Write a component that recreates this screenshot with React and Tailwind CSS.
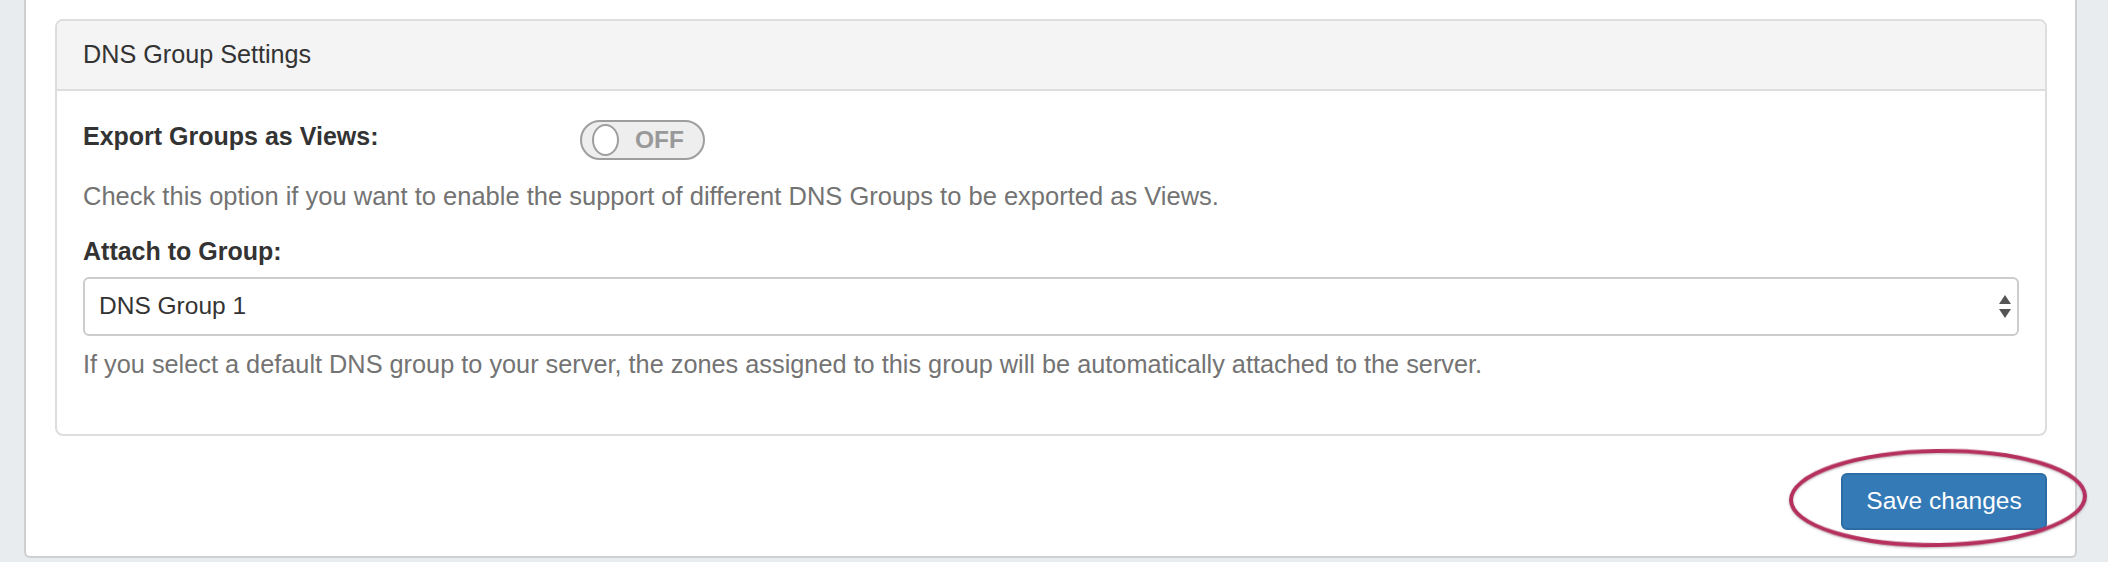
import { useState } from "react";

function SelectArrows() {
  return (
    <svg width="12" height="23" viewBox="0 0 12 23" className="shrink-0">
      <path d="M6 0 L12 9 L0 9 Z" fill="#555" />
      <path d="M0 14 L12 14 L6 23 Z" fill="#555" />
    </svg>
  );
}

function OffToggle({ on, onToggle }) {
  return (
    <button
      type="button"
      onClick={onToggle}
      className="mt-[2px] flex h-[40px] w-[125px] items-center rounded-full border-2 border-[#9e9e9e] bg-[#eeeeee] pl-[10px]"
    >
      <span className="h-[32px] w-[27px] rounded-[50%] border-2 border-[#9e9e9e] bg-white" />
      <span className="ml-[16px] text-[24.5px] font-bold leading-none text-[#999]">{on ? "ON" : "OFF"}</span>
    </button>
  );
}

export default function App() {
  const [exportViews, setExportViews] = useState(false);

  return (
    <div
      className="flex h-[562px] w-[2108px] bg-[#e9ecef] pl-[24px] pr-[31px]"
      style={{ fontFamily: '"Liberation Sans", Arial, sans-serif' }}
    >
      <div className="flex h-[558px] flex-1 flex-col rounded-b-[6px] border-x-2 border-b-2 border-[#cfcfcf] bg-white pl-[29px] pr-[28px] pt-[19px]">
        {/* DNS group panel */}
        <div className="rounded-[8px] border-2 border-[#dddddd]">
          <div className="flex h-[70px] items-center rounded-t-[6px] border-b-2 border-[#dddddd] bg-[#f4f4f4] px-[26px] text-[25.2px] text-[#333]">
            DNS Group Settings
          </div>

          <div className="px-[26px] pb-[52px] pt-[27px] text-[#333]">
            <div className="flex items-start">
              <label className="w-[497px] text-[25px] font-bold leading-[36px]">Export Groups as Views:</label>
              <OffToggle on={exportViews} onToggle={() => setExportViews((v) => !v)} />
            </div>

            <p className="mt-[18px] text-[25.5px] leading-[36px] text-[#737373]">
              Check this option if you want to enable the support of different DNS Groups to be exported as Views.
            </p>

            <label className="mt-[19px] block text-[25px] font-bold leading-[36px]">Attach to Group:</label>

            <div className="mt-[8px] flex h-[59px] items-center justify-between rounded-[6px] border-2 border-[#cccccc] bg-white pl-[14px] pr-[6px] text-[24.5px] text-[#333]">
              <span>DNS Group 1</span>
              <SelectArrows />
            </div>

            <p className="mt-[10px] text-[25.3px] leading-[36px] text-[#737373]">
              If you select a default DNS group to your server, the zones assigned to this group will be automatically
              attached to the server.
            </p>
          </div>
        </div>

        <div className="mt-[37px] flex justify-end">
          <div className="relative">
            <button
              type="button"
              className="h-[57px] w-[206px] rounded-[6px] border-2 border-[#2e6da4] bg-[#337ab7] text-[24.5px] text-white"
            >
              Save changes
            </button>
            {/* annotation ring */}
            <svg
              width="298"
              height="98"
              viewBox="0 0 298 98"
              className="pointer-events-none absolute left-[-52px] top-[-24px] overflow-visible"
            >
              <ellipse
                cx="149"
                cy="49"
                rx="147"
                ry="47"
                fill="none"
                stroke="#b5305e"
                strokeWidth="4"
                transform="rotate(-0.8 149 49)"
                style={{ filter: "drop-shadow(0 1px 1px rgba(0,0,0,0.25))" }}
              />
            </svg>
          </div>
        </div>
      </div>
    </div>
  );
}
